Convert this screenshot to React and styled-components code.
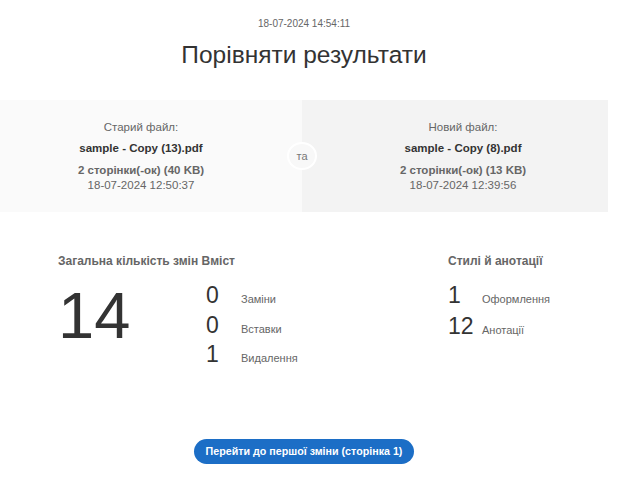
import React from "react";
import styled, { createGlobalStyle } from "styled-components";

const Global = createGlobalStyle`
  html, body { margin: 0; padding: 0; background: #fff; }
  body { font-family: "Liberation Sans", Arial, sans-serif; color: #333; }
`;

const Page = styled.div`
  width: 608px;
  display: flex;
  flex-direction: column;
`;

const Header = styled.header`
  display: flex;
  flex-direction: column;
  align-items: center;
  padding-top: 18px;
  height: 100px;
  box-sizing: border-box;
`;

const Stamp = styled.div`
  font-size: 10px;
  line-height: 12px;
  color: #666;
`;

const Title = styled.h1`
  margin: 10px 0 0;
  font-size: 24.5px;
  line-height: 30px;
  font-weight: normal;
  color: #333;
`;

const Files = styled.section`
  position: relative;
  display: grid;
  grid-template-columns: 302px 306px;
  height: 112px;
`;

const FilePanel = styled.div`
  background: ${(p) => p.$bg};
  display: flex;
  flex-direction: column;
  align-items: center;
  padding: 20px ${(p) => p.$padR} 0 ${(p) => p.$padL};
  box-sizing: border-box;
  font-size: 11.5px;
  line-height: 15px;
  color: #666;
`;

const FileLabel = styled.div`
  margin-bottom: 6px;
`;

const FileName = styled.div`
  font-weight: bold;
  color: #333;
  margin-bottom: 7px;
`;

const FileMeta = styled.div`
  font-weight: ${(p) => (p.$bold ? "bold" : "normal")};
  line-height: 15px;
`;

const Versus = styled.div`
  position: absolute;
  left: 287px;
  top: 42px;
  width: 30px;
  height: 28px;
  border-radius: 50%;
  border: 2px solid #fff;
  background: #f8f8f8;
  box-sizing: border-box;
  display: flex;
  align-items: center;
  justify-content: center;
  font-size: 11px;
  color: #777;
`;

const Stats = styled.section`
  display: flex;
  padding: 42px 0 0 58px;
`;

const Group = styled.div`
  width: ${(p) => p.$w || "auto"};
  display: flex;
  flex-direction: column;
`;

const GroupTitle = styled.h2`
  margin: 0 0 9px;
  font-size: 12px;
  line-height: 14px;
  font-weight: bold;
  color: #666;
`;

const GroupBody = styled.div`
  display: flex;
  align-items: flex-start;
`;

const Total = styled.div`
  width: 148px;
  margin-top: 6px;
  font-size: 65px;
  line-height: 65px;
  color: #333;
`;

const CountList = styled.div`
  display: grid;
  grid-template-columns: ${(p) => p.$numW} auto;
  grid-auto-rows: ${(p) => p.$rowH};
  align-items: baseline;
  margin-top: ${(p) => p.$offset};
`;

const Count = styled.div`
  font-size: 23px;
  line-height: ${(p) => p.$rowH};
  color: #333;
`;

const CountLabel = styled.div`
  font-size: 11px;
  color: #666;
`;

const Footer = styled.div`
  display: flex;
  justify-content: center;
  padding-top: 69px;
`;

const JumpButton = styled.button`
  height: 25px;
  padding: 0 12px;
  border: none;
  border-radius: 13px;
  background: #1c6ec6;
  color: #fff;
  font-family: "Liberation Sans", Arial, sans-serif;
  font-size: 10.7px;
  font-weight: bold;
  cursor: pointer;
`;

const contentRows = [
  ["0", "Заміни"],
  ["0", "Вставки"],
  ["1", "Видалення"],
];

const styleRows = [
  ["1", "Оформлення"],
  ["12", "Анотації"],
];

function Counts({ rows, numW, rowH, offset }) {
  return (
    <CountList $numW={numW} $rowH={rowH} $offset={offset}>
      {rows.map(([n, l]) => (
        <React.Fragment key={l}>
          <Count $rowH={rowH}>{n}</Count>
          <CountLabel>{l}</CountLabel>
        </React.Fragment>
      ))}
    </CountList>
  );
}

export default function App() {
  return (
    <>
      <Global />
      <Page>
        <Header>
          <Stamp>18-07-2024 14:54:11</Stamp>
          <Title>Порівняти результати</Title>
        </Header>
        <Files>
          <FilePanel $bg="#fafafa" $padL="0" $padR="20px">
            <FileLabel>Старий файл:</FileLabel>
            <FileName>sample - Copy (13).pdf</FileName>
            <FileMeta $bold>2 сторінки(-ок) (40 KB)</FileMeta>
            <FileMeta>18-07-2024 12:50:37</FileMeta>
          </FilePanel>
          <FilePanel $bg="#f3f3f3" $padL="16px" $padR="0">
            <FileLabel>Новий файл:</FileLabel>
            <FileName>sample - Copy (8).pdf</FileName>
            <FileMeta $bold>2 сторінки(-ок) (13 KB)</FileMeta>
            <FileMeta>18-07-2024 12:39:56</FileMeta>
          </FilePanel>
          <Versus>та</Versus>
        </Files>
        <Stats>
          <Group $w="390px">
            <GroupTitle>Загальна кількість змін Вміст</GroupTitle>
            <GroupBody>
              <Total>14</Total>
              <Counts rows={contentRows} numW="35px" rowH="29.5px" offset="4px" />
            </GroupBody>
          </Group>
          <Group>
            <GroupTitle>Стилі й анотації</GroupTitle>
            <Counts rows={styleRows} numW="34px" rowH="31px" offset="3px" />
          </Group>
        </Stats>
        <Footer>
          <JumpButton>Перейти до першої зміни (сторінка 1)</JumpButton>
        </Footer>
      </Page>
    </>
  );
}
